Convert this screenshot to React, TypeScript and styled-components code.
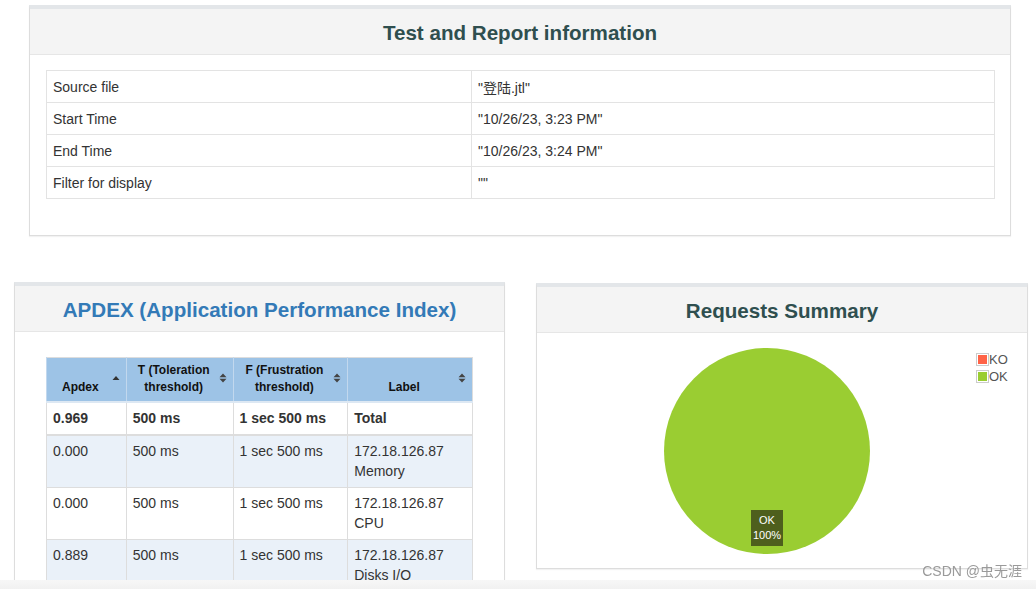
import styled, { createGlobalStyle } from "styled-components";

const GlobalStyle = createGlobalStyle`
  html, body {
    margin: 0;
    padding: 0;
    background: #fff;
    overflow: hidden;
  }
  body {
    font-family: "Liberation Sans", Arial, "Noto Sans CJK SC", sans-serif;
    color: #333;
  }
`;

const Page = styled.div`
  display: flex;
  flex-direction: column;
  padding-top: 5px;
  height: 589px;
  box-sizing: border-box;
`;

const TopArea = styled.div`
  margin: 0 25px 0 29px;
`;

const BottomRow = styled.div`
  display: flex;
  align-items: flex-start;
  gap: 31px;
  margin-top: 46px;
  padding-left: 14px;
`;

const Panel = styled.section<{ width?: number; offset?: number }>`
  display: flex;
  flex-direction: column;
  box-sizing: border-box;
  width: ${(p) => (p.width ? `${p.width}px` : "auto")};
  margin-top: ${(p) => p.offset || 0}px;
  background: #fff;
  border: 1px solid #ddd;
  border-top: 4px solid #e3e6e9;
  box-shadow: 0 1px 1px rgba(0, 0, 0, 0.05);
`;

const PanelHeading = styled.div`
  display: flex;
  align-items: center;
  justify-content: center;
  height: 46px;
  padding-top: 2px;
  box-sizing: border-box;
  background: #f4f4f4;
  border-bottom: 1px solid #e6e6e6;
`;

const PanelTitle = styled.h3<{ color?: string }>`
  margin: 0;
  font-size: 20.6px;
  font-weight: bold;
  color: ${(p) => p.color || "#2f4f4f"};
`;

const PanelBody = styled.div<{ pad: string }>`
  padding: ${(p) => p.pad};
`;

const InfoTable = styled.table`
  width: 100%;
  border-collapse: collapse;
  font-size: 14px;

  td {
    height: 31px;
    padding: 0 6px;
    border: 1px solid #e3e3e3;
  }
  td:first-child {
    width: 412px;
  }
`;

const ApdexTable = styled.table`
  width: 427px;
  border-collapse: collapse;
  font-size: 14px;
  border: 1px solid #ddd;
`;

const HeadCell = styled.th<{ w: number }>`
  width: ${(p) => p.w}px;
  height: 44px;
  box-sizing: border-box;
  padding: 0 6px 5px 6px;
  background: #9dc3e6;
  border-left: 1px solid #c2d8ee;
  border-bottom: 2px solid #dde8f3;
  font-size: 12px;
  font-weight: bold;
  color: #111;
  line-height: 17px;
  vertical-align: bottom;
`;

const HeadInner = styled.div`
  display: flex;
  align-items: flex-end;
`;

const HeadText = styled.span`
  flex: 1;
  text-align: center;
`;

const SortIcon = styled.svg<{ lift: number }>`
  flex: none;
  margin-bottom: ${(p) => p.lift}px;
  margin-left: 4px;
`;

const Row = styled.tr<{ shade?: boolean; strong?: boolean }>`
  background: ${(p) => (p.shade ? "#eaf1f9" : "#fff")};
  font-weight: ${(p) => (p.strong ? "bold" : "normal")};
  border-bottom: ${(p) => (p.strong ? "2px solid #ddd" : "1px solid #ddd")};

  td {
    padding: 5px 6px 6px;
    line-height: 20px;
    vertical-align: top;
    border-left: 1px solid #ddd;
  }
`;

const ChartArea = styled.div`
  position: relative;
  display: flex;
  height: 235px;
  padding: 15px 0 0 127px;
  box-sizing: border-box;
`;

const PieWrap = styled.div`
  position: relative;
  width: 206px;
  height: 206px;
`;

const PieLabel = styled.div`
  position: absolute;
  left: 87px;
  top: 162px;
  width: 32px;
  padding: 3px 0;
  background: #4e5f1d;
  color: #fff;
  font-size: 11px;
  line-height: 15px;
  text-align: center;
`;

const Legend = styled.div`
  position: absolute;
  top: 20px;
  left: 439px;
  display: flex;
  flex-direction: column;
  gap: 4px;
  font-size: 13px;
  color: #545454;
`;

const LegendItem = styled.div`
  display: flex;
  align-items: center;
  height: 13px;
`;

const Swatch = styled.span<{ color: string }>`
  display: inline-block;
  width: 9px;
  height: 9px;
  border: 1px solid #ccc;
  padding: 1px;
  background: ${(p) => p.color};
  background-clip: content-box;
`;

const BottomBar = styled.div`
  position: fixed;
  left: 0;
  right: 0;
  bottom: 0;
  height: 9px;
  background: linear-gradient(#f7f7f7, #f1f1f1);
`;

const Watermark = styled.div`
  position: fixed;
  right: 14px;
  bottom: 9px;
  font-size: 14px;
  color: #9a9a9a;
  font-family: "Liberation Sans", Arial, "Noto Sans CJK SC", sans-serif;
`;

const UpIcon = () => (
  <SortIcon lift={14} width="8" height="8" viewBox="0 0 8 8">
    <path d="M0.5 6 L4 2 L7.5 6 Z" fill="#333" />
  </SortIcon>
);

const BothIcon = () => (
  <SortIcon lift={13} width="8" height="10" viewBox="0 0 8 10">
    <path d="M0.5 4.3 L4 0.5 L7.5 4.3 Z M0.5 5.7 L4 9.5 L7.5 5.7 Z" fill="#444" />
  </SortIcon>
);

const info = [
  ["Source file", "\"登陆.jtl\""],
  ["Start Time", "\"10/26/23, 3:23 PM\""],
  ["End Time", "\"10/26/23, 3:24 PM\""],
  ["Filter for display", "\"\""],
];

const apdexRows = [
  { apdex: "0.969", t: "500 ms", f: "1 sec 500 ms", label: ["Total"], strong: true },
  { apdex: "0.000", t: "500 ms", f: "1 sec 500 ms", label: ["172.18.126.87", "Memory"] },
  { apdex: "0.000", t: "500 ms", f: "1 sec 500 ms", label: ["172.18.126.87", "CPU"] },
  { apdex: "0.889", t: "500 ms", f: "1 sec 500 ms", label: ["172.18.126.87", "Disks I/O"] },
];

const App: React.FC = () => {
  return (
    <>
      <GlobalStyle />
      <Page>
        <TopArea>
          <Panel>
            <PanelHeading>
              <PanelTitle>Test and Report information</PanelTitle>
            </PanelHeading>
            <PanelBody pad="15px 15px 36px 16px">
              <InfoTable>
                <tbody>
                  {info.map(([k, v]) => (
                    <tr key={k}>
                      <td>{k}</td>
                      <td>{v}</td>
                    </tr>
                  ))}
                </tbody>
              </InfoTable>
            </PanelBody>
          </Panel>
        </TopArea>

        <BottomRow>
          <Panel width={491}>
            <PanelHeading>
              <PanelTitle color="#337ab7">APDEX (Application Performance Index)</PanelTitle>
            </PanelHeading>
            <PanelBody pad="25px 31px 0 31px">
              <ApdexTable>
                <thead>
                  <tr>
                    <HeadCell w={80}>
                      <HeadInner>
                        <HeadText>Apdex</HeadText>
                        <UpIcon />
                      </HeadInner>
                    </HeadCell>
                    <HeadCell w={107}>
                      <HeadInner>
                        <HeadText>
                          T (Toleration
                          <br />
                          threshold)
                        </HeadText>
                        <BothIcon />
                      </HeadInner>
                    </HeadCell>
                    <HeadCell w={115}>
                      <HeadInner>
                        <HeadText>
                          F (Frustration
                          <br />
                          threshold)
                        </HeadText>
                        <BothIcon />
                      </HeadInner>
                    </HeadCell>
                    <HeadCell w={125}>
                      <HeadInner>
                        <HeadText>Label</HeadText>
                        <BothIcon />
                      </HeadInner>
                    </HeadCell>
                  </tr>
                </thead>
                <tbody>
                  {apdexRows.map((r, i) => (
                    <Row key={i} strong={r.strong} shade={i % 2 === 1}>
                      <td>{r.apdex}</td>
                      <td>{r.t}</td>
                      <td>{r.f}</td>
                      <td>
                        {r.label.map((l, j) => (
                          <div key={j}>{l}</div>
                        ))}
                      </td>
                    </Row>
                  ))}
                </tbody>
              </ApdexTable>
            </PanelBody>
          </Panel>

          <Panel width={492} offset={1}>
            <PanelHeading>
              <PanelTitle>Requests Summary</PanelTitle>
            </PanelHeading>
            <ChartArea>
              <PieWrap>
                <svg width="206" height="206" viewBox="0 0 206 206">
                  <circle cx="103" cy="103" r="103" fill="#9acd32" />
                </svg>
                <PieLabel>
                  OK
                  <br />
                  100%
                </PieLabel>
              </PieWrap>
              <Legend>
                <LegendItem>
                  <Swatch color="#ff6347" />
                  KO
                </LegendItem>
                <LegendItem>
                  <Swatch color="#9acd32" />
                  OK
                </LegendItem>
              </Legend>
            </ChartArea>
          </Panel>
        </BottomRow>
      </Page>
      <BottomBar />
      <Watermark>CSDN @虫无涯</Watermark>
    </>
  );
};

export default App;
